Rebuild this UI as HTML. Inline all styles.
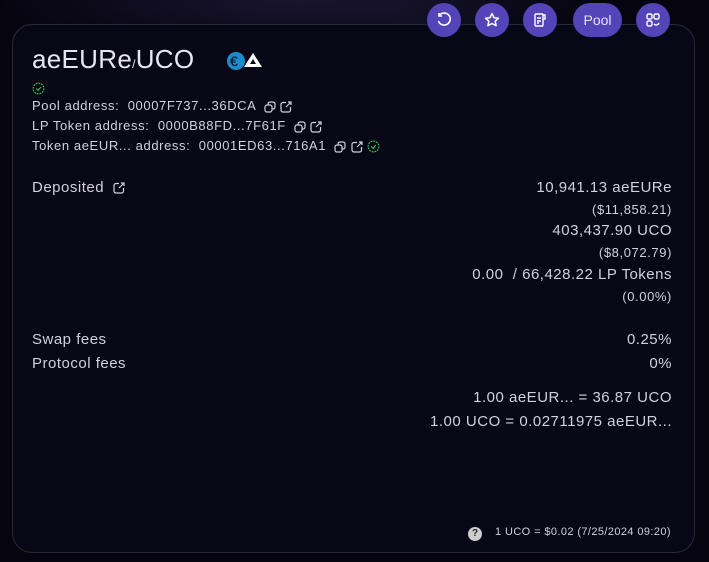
<!DOCTYPE html>
<html><head><style>
body{margin:0;width:709px;height:562px;overflow:hidden;background:#06050f;font-family:"Liberation Sans",sans-serif;color:#d2d0dc;position:relative}
.bg{position:absolute;inset:0;background:radial-gradient(ellipse 140px 300px at 420px 250px,rgba(70,60,120,.25),transparent),radial-gradient(ellipse 300px 60px at 300px 0px,rgba(60,50,110,.35),transparent)}
.card{position:absolute;left:12px;top:24px;width:681px;height:527px;border:1px solid #2a2838;border-radius:20px;background:#080715}
.btn{position:absolute;top:3px;height:34px;width:34px;border-radius:17px;background:#5543b8;display:flex;align-items:center;justify-content:center;color:#e6e2f6;font-size:14px}
.t{position:absolute;white-space:nowrap}
.r{position:absolute;right:37px;text-align:right;white-space:nowrap}
.s{font-size:13px;letter-spacing:.6px}
.m{font-size:15px;letter-spacing:.5px}
svg{display:inline-block;vertical-align:middle}
</style></head><body>
<div class="bg"></div>
<div class="card"></div>
<div class="btn" style="left:427px"><svg width="16" height="16" viewBox="0 0 16 16" fill="none" stroke="#fff" stroke-width="1.6"><path d="M3 4A6 6 0 1 1 2.5 9"/><path d="M3 1v3h3"/></svg></div>
<div class="btn" style="left:475px"><svg width="16" height="16" viewBox="0 0 16 16" fill="none" stroke="#fff" stroke-width="1.5"><path d="M8 1.5l2 4.2 4.5.5-3.3 3 .9 4.5L8 11.5 3.9 13.7l.9-4.5-3.3-3 4.5-.5z" stroke-linejoin="round"/></svg></div>
<div class="btn" style="left:523px"><svg width="16" height="16" viewBox="0 0 16 16" fill="none" stroke="#fff" stroke-width="1.4"><rect x="3" y="2" width="8" height="12" rx="1"/><path d="M11 3h2v4h-2M5 6h4M5 9h4M5 11h2"/></svg></div>
<div class="btn" style="left:573px;width:49px">Pool</div>
<div class="btn" style="left:636px"><svg width="16" height="16" viewBox="0 0 16 16" fill="none" stroke="#fff" stroke-width="1.4"><rect x="2" y="2" width="5" height="5" rx="1.5"/><rect x="9" y="2" width="5" height="5" rx="1.5"/><rect x="2" y="9" width="5" height="5" rx="1.5"/><path d="M9 12a3 3 0 0 0 5-1"/></svg></div>

<div class="t" style="left:32px;top:44px;font-size:26px;letter-spacing:.3px;color:#e8e6f0">aeEURe<span style="font-size:12px">/</span>UCO</div>
<div class="t" style="left:226px;top:51px"><svg width="40" height="20" viewBox="0 0 40 20"><circle cx="10" cy="10" r="9" fill="#1a8ccc"/><text x="4" y="15" font-size="14" fill="#000" font-family="Liberation Sans">€</text><path d="M27 2l9 14H18z" fill="#fff"/><path d="M27 8l3 5h-6z" fill="#080715"/></svg></div>
<div class="t" style="left:32px;top:80px"><svg width="13" height="13" viewBox="0 0 14 14" fill="none" stroke="#2ecc5a" stroke-width="1.2"><circle cx="7" cy="7" r="5.8" stroke-dasharray="2 1"/><path d="M4.5 7l2 2 3-3.5"/></svg></div>
<svg width="0" height="0" style="position:absolute"><defs><symbol id="cp" viewBox="0 0 12 12"><g fill="none" stroke="#d2d0dc" stroke-width="1.2"><rect x="1" y="4" width="7" height="7" rx="2"/><path d="M4 4V3a2 2 0 0 1 2-2h3a2 2 0 0 1 2 2v3a2 2 0 0 1-2 2H8"/></g></symbol><symbol id="ex" viewBox="0 0 12 12"><g fill="none" stroke="#d2d0dc" stroke-width="1.2"><path d="M6 1.5H3a2 2 0 0 0-2 2V9a2 2 0 0 0 2 2h5.5a2 2 0 0 0 2-2V6"/><path d="M6 6l5-5M8 1h3v3"/></g></symbol></defs></svg>
<div class="t s" style="left:32px;top:98px">Pool address:&nbsp; 00007F737...36DCA &nbsp;<svg width="12" height="12"><use href="#cp"/></svg> <svg width="12" height="12"><use href="#ex"/></svg></div>
<div class="t s" style="left:32px;top:118px">LP Token address:&nbsp; 0000B88FD...7F61F &nbsp;<svg width="12" height="12"><use href="#cp"/></svg> <svg width="12" height="12"><use href="#ex"/></svg></div>
<div class="t s" style="left:32px;top:138px">Token aeEUR... address:&nbsp; 00001ED63...716A1 &nbsp;<svg width="12" height="12"><use href="#cp"/></svg> <svg width="12" height="12"><use href="#ex"/></svg> <svg width="13" height="13" viewBox="0 0 14 14" fill="none" stroke="#2ecc5a" stroke-width="1.2"><circle cx="7" cy="7" r="5.8" stroke-dasharray="2 1"/><path d="M4.5 7l2 2 3-3.5"/></svg></div>

<div class="t m" style="left:32px;top:179px">Deposited &nbsp;<svg width="12" height="12"><use href="#ex"/></svg></div>
<div class="r m" style="top:179px">10,941.13 aeEURe</div>
<div class="r s" style="top:202px">($11,858.21)</div>
<div class="r m" style="top:222px">403,437.90 UCO</div>
<div class="r s" style="top:245px">($8,072.79)</div>
<div class="r m" style="top:266px">0.00 &nbsp;/ 66,428.22 LP Tokens</div>
<div class="r s" style="top:289px">(0.00%)</div>
<div class="t m" style="left:32px;top:331px">Swap fees</div>
<div class="r m" style="top:331px">0.25%</div>
<div class="t m" style="left:32px;top:355px">Protocol fees</div>
<div class="r m" style="top:355px">0%</div>
<div class="r m" style="top:389px">1.00 aeEUR... = 36.87 UCO</div>
<div class="r m" style="top:413px">1.00 UCO = 0.02711975 aeEUR...</div>
<div class="t" style="left:468px;top:527px;width:14px;height:14px;border-radius:7px;background:#ccc;color:#222;font-size:10px;text-align:center;line-height:14px;font-weight:bold">?</div>
<div class="t" style="left:495px;top:526px;font-size:11px;letter-spacing:.4px">1 UCO = $0.02 (7/25/2024 09:20)</div>
</body></html>
